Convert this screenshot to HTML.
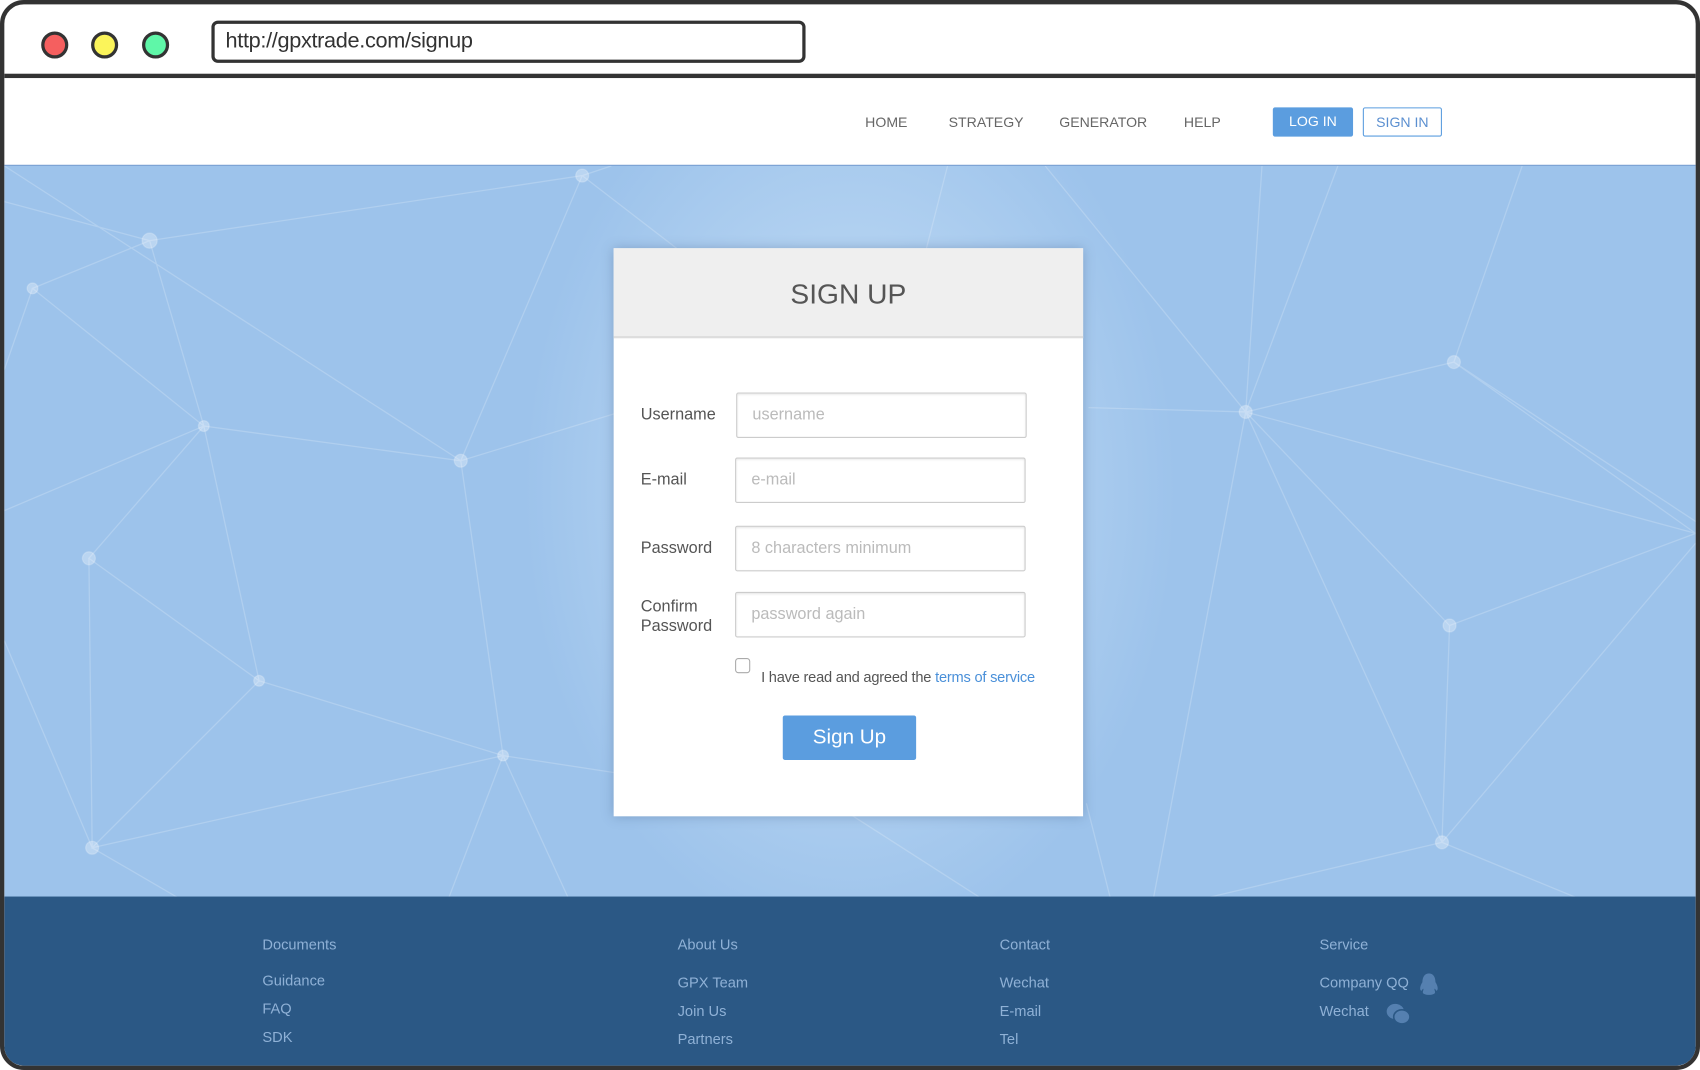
<!DOCTYPE html>
<html><head><meta charset="utf-8"><style>
html,body{margin:0;padding:0;width:1700px;height:1070px;overflow:hidden;background:#fff}
#w{position:absolute;left:0;top:0;width:1568px;height:987px;transform-origin:0 0;transform:scale(1.08418,1.08409);font-family:"Liberation Sans",sans-serif}
.frame{position:absolute;left:0;top:0;width:1560px;height:979px;border:4px solid #333;border-radius:22px;overflow:hidden;background:#fff}
.dot{position:absolute;top:25px;width:19px;height:19px;border:3px solid #333;border-radius:50%}
.url{position:absolute;left:191px;top:15px;width:532px;height:33px;border:3px solid #333;border-radius:6px;font-size:20px;line-height:33px;padding-left:10px;color:#333;box-sizing:content-box;letter-spacing:-0.3px}
.bar{position:absolute;left:0;top:64px;width:100%;height:4px;background:#333}
.nav{position:absolute;top:101px;font-size:13px;color:#666}
.btn{position:absolute;top:95px;height:27px;box-sizing:border-box;font-size:13px;line-height:25px;text-align:center;border-radius:2px}
.bg{position:absolute;left:0;top:148px;width:100%;height:675px;background:radial-gradient(ellipse 300px 420px at 780px 300px,#d6e8f8 0%,#b3d2f1 50%,#9dc3eb 100%);border-top:1px solid #6d98cf}
.card{position:absolute;left:562px;top:225px;width:433px;height:524px;background:#fff;box-shadow:0 0 10px rgba(60,90,130,.35)}
.ch{height:81px;background:#efefef;border-bottom:2px solid #ddd;text-align:center;font-size:26px;line-height:84px;color:#555}
.lab{position:absolute;left:25px;font-size:15px;color:#555}
.inp{position:absolute;left:112px;width:268px;height:42px;box-sizing:border-box;border:1px solid #ccc;border-radius:2px;box-shadow:inset 0 1px 2px rgba(0,0,0,.1);font-size:15px;color:#bbb;padding-left:14px;line-height:40px}
.foot{position:absolute;left:0;top:823px;width:100%;height:160px;background:#2b5885;color:#8fb1d6;font-size:13.5px}
.foot div{position:absolute}
</style></head><body><div id="w"><div class="frame">
<div class="dot" style="left:34px;background:#f55f5f"></div>
<div class="dot" style="left:80px;background:#fbf45a"></div>
<div class="dot" style="left:127px;background:#5ff7a8"></div>
<div class="url">http://gpxtrade.com/signup</div>
<div class="bar"></div>
<div class="nav" style="left:794px">HOME</div>
<div class="nav" style="left:871px">STRATEGY</div>
<div class="nav" style="left:973px">GENERATOR</div>
<div class="nav" style="left:1088px">HELP</div>
<div class="btn" style="left:1170px;width:74px;background:#5b9ddf;color:#fff">LOG IN</div>
<div class="btn" style="left:1253px;width:73px;border:1px solid #5b9ddf;color:#5b8fd0">SIGN IN</div>
<div class="bg"><svg width="1560" height="675" viewBox="0 152 1560 675" style="position:absolute;left:0;top:0" stroke="rgba(255,255,255,.2)" stroke-width="1.2" fill="rgba(255,255,255,.3)">
<g fill="none">
<path d="M134 221 L533 161 L421 424 L184 392 L134 221 L26 265 L184 392 L78 514 L235 627 L184 392 M0 470 L184 392 M421 424 L460 696 L235 627 M78 514 L81 781 L235 627 M460 696 L81 781 M460 696 L520 827 M460 696 L565 712 M26 265 L0 340 M134 221 L0 185 M533 161 L620 228 M533 161 L560 152 M81 781 L160 827 M0 590 L81 781 M421 424 L565 380 M421 424 L0 152 M460 696 L410 827"/>
<path d="M1145 379 L1337 333 L1560 491 L1333 576 L1145 379 L1000 375 M1145 379 L1560 491 M1145 379 L1160 152 M1337 333 L1400 152 M1145 379 L1060 827 M1333 576 L1326 776 L1110 827 M1326 776 L1450 827 M1333 576 L1560 491 M1326 776 L1560 500 M1145 379 L1326 776 M960 152 L1145 379 M1337 333 L1560 480 M1230 152 L1145 379 M850 230 L870 152 M998 740 L1020 827 M780 750 L900 827"/>
</g>
<circle cx="533" cy="161" r="6"/><circle cx="134" cy="221" r="7"/><circle cx="26" cy="265" r="5"/><circle cx="184" cy="392" r="5"/><circle cx="421" cy="424" r="6"/><circle cx="78" cy="514" r="6"/><circle cx="235" cy="627" r="5"/><circle cx="460" cy="696" r="5"/><circle cx="81" cy="781" r="6"/><circle cx="1145" cy="379" r="6"/><circle cx="1337" cy="333" r="6"/><circle cx="1333" cy="576" r="6"/><circle cx="1326" cy="776" r="6"/>
</svg></div>
<div class="card"><div class="ch">SIGN UP</div>
<div class="lab" style="top:145px">Username</div><div class="inp" style="top:133px;left:113px">username</div>
<div class="lab" style="top:205px">E-mail</div><div class="inp" style="top:193px">e-mail</div>
<div class="lab" style="top:268px">Password</div><div class="inp" style="top:256px">8 characters minimum</div>
<div class="lab" style="top:322px;line-height:18px">Confirm<br>Password</div><div class="inp" style="top:317px">password again</div>
<div style="position:absolute;left:112px;top:378px;width:12px;height:12px;border:1px solid #aaa;border-radius:3px"></div>
<div style="position:absolute;left:136px;top:388px;font-size:13.5px;color:#555;letter-spacing:-0.2px">I have read and agreed the <span style="color:#4a90d9">terms of service</span></div>
<div style="position:absolute;left:156px;top:431px;width:123px;height:41px;background:#5b9ddf;border-radius:2px;color:#fff;font-size:19px;line-height:41px;text-align:center">Sign Up</div>
</div>
<div class="foot">
<div style="left:238px;top:37px">Documents</div><div style="left:238px;top:70px">Guidance</div><div style="left:238px;top:96px">FAQ</div><div style="left:238px;top:122px">SDK</div>
<div style="left:621px;top:37px">About Us</div><div style="left:621px;top:72px">GPX Team</div><div style="left:621px;top:98px">Join Us</div><div style="left:621px;top:124px">Partners</div>
<div style="left:918px;top:37px">Contact</div><div style="left:918px;top:72px">Wechat</div><div style="left:918px;top:98px">E-mail</div><div style="left:918px;top:124px">Tel</div>
<div style="left:1213px;top:37px">Service</div><div style="left:1213px;top:72px">Company QQ</div><div style="left:1213px;top:98px">Wechat</div>
<svg style="position:absolute;left:1304px;top:70px" width="20" height="22" viewBox="0 0 20 22" fill="#5580b0"><path d="M10 1C5 1 4 6 4 9 2 12 1 16 3 17 4 16 4 15 5 15 5 17 3 19 6 20 8 21 12 21 14 20 17 19 15 17 15 15 16 15 16 16 17 17 19 16 18 12 16 9 16 6 15 1 10 1Z"/></svg>
<svg style="position:absolute;left:1274px;top:98px" width="24" height="22" viewBox="0 0 24 22" fill="#5580b0"><ellipse cx="9" cy="8" rx="8" ry="7"/><ellipse cx="15" cy="13" rx="7.5" ry="6.5" stroke="#2b5885" stroke-width="1.5"/></svg>
</div>
</div></div></body></html>
